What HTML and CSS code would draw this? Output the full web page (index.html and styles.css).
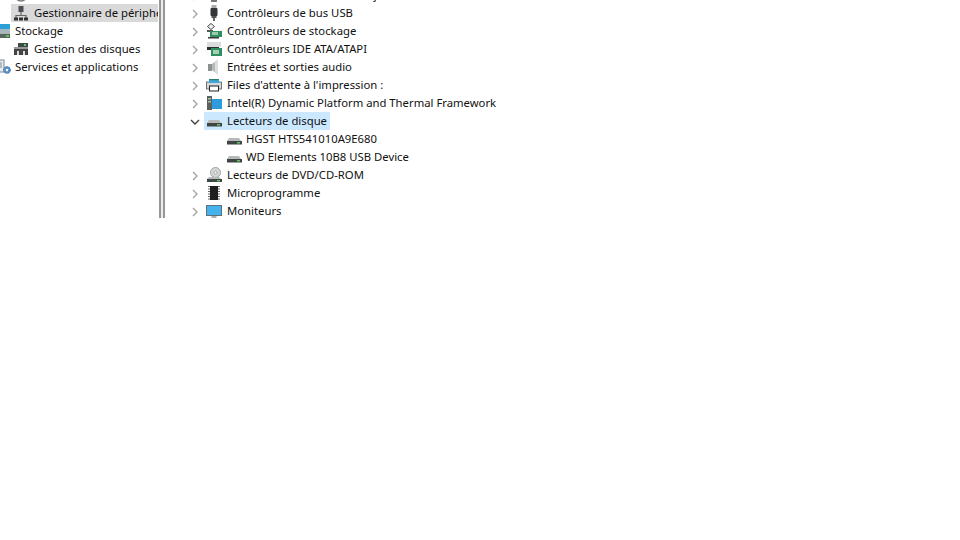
FILE: index.html
```html
<!DOCTYPE html>
<html lang="fr">
<head>
<meta charset="utf-8">
<title>Gestion de l'ordinateur</title>
<link rel="stylesheet" href="styles.css">
</head>
<body>
<div class="app">
  <nav class="left">
    <div class="row lv1">
      <svg class="ic" viewBox="0 0 16 16"><circle cx="8" cy="8" r="6" fill="#eee" stroke="#777" stroke-width="1.5"/></svg>
    </div>
    <div class="row lv1 selected">
      <svg class="ic" viewBox="0 0 16 16"><rect x="5.500" y="1" width="5" height="6" fill="#4a4f55"/><path d="M8 7v3M3 13v-2.500h10V13" fill="none" stroke="#666" stroke-width="1.200"/><rect x="1" y="12.500" width="4" height="3" fill="#333"/><rect x="6" y="12.500" width="4" height="3" fill="#333"/><rect x="11" y="12.500" width="4" height="3" fill="#333"/></svg>
      <span class="label">Gestionnaire de périphé</span>
    </div>
    <div class="row lv0">
      <svg class="ic" viewBox="0 0 16 16"><rect x="2" y="1" width="12" height="5" fill="#2d9fd8"/><rect x="2" y="6" width="12" height="4" fill="#a9b8bf"/><rect x="2" y="10.500" width="12" height="4.500" fill="#56665e"/><rect x="10" y="12" width="3" height="2" fill="#5fc15f"/></svg>
      <span class="label">Stockage</span>
    </div>
    <div class="row lv1">
      <svg class="ic" viewBox="0 0 16 16"><rect x="5" y="2" width="10" height="4" fill="#3f4a46"/><rect x="11" y="3" width="2" height="2" fill="#63c463"/><rect x="1" y="6" width="14" height="8" fill="#444"/><rect x="1" y="6" width="14" height="2" fill="#999"/><rect x="4" y="10" width="2" height="4" fill="#ddd"/><rect x="10" y="10" width="2" height="4" fill="#ddd"/></svg>
      <span class="label">Gestion des disques</span>
    </div>
    <div class="row lv0">
      <svg class="ic" viewBox="0 0 16 16"><rect x="1" y="1" width="7" height="12" fill="#e8edf0" stroke="#7b8790"/><path d="M3 4h3M3 6h3M3 8h3" stroke="#7b8790"/><circle cx="11" cy="11" r="3.400" fill="#5b93c9" stroke="#3b6ea5" stroke-dasharray="1.500 1"/><circle cx="11" cy="11" r="1.200" fill="#fff"/></svg>
      <span class="label">Services et applications</span>
    </div>
  </nav>
  <div class="divider"></div>
  <main class="right">
    <div class="row node">
      <span class="chev"><svg viewBox="0 0 10 10"><path d="M3 1l4 4-4 4"/></svg></span>
      <svg class="ic" viewBox="0 0 16 16"><rect x="5" y="10" width="6" height="5" fill="#777"/></svg>
      <span class="label">Contrôleurs audio, vidéo et jeu</span>
    </div>
    <div class="row node">
      <span class="chev"><svg viewBox="0 0 10 10"><path d="M3 1l4 4-4 4"/></svg></span>
      <svg class="ic" viewBox="0 0 16 16"><rect x="5.500" y="0" width="5" height="3" fill="#aaa"/><rect x="4.500" y="3" width="7" height="8" rx="1" fill="#34373a"/><rect x="5.500" y="11" width="5" height="2" fill="#555"/><rect x="7" y="13" width="2" height="3" fill="#666"/></svg>
      <span class="label">Contrôleurs de bus USB</span>
    </div>
    <div class="row node">
      <span class="chev"><svg viewBox="0 0 10 10"><path d="M3 1l4 4-4 4"/></svg></span>
      <svg class="ic" viewBox="0 0 16 16"><path d="M5 0.500l3.500 3L5 6.500 1.500 3.500z" fill="#f2f2f2" stroke="#444"/><rect x="1" y="7" width="6" height="2" fill="#555"/><rect x="4" y="8" width="12" height="6" fill="#2f8f5f"/><rect x="6" y="9" width="6" height="3" fill="#9cc9ad"/><rect x="2" y="14" width="11" height="1.500" fill="#3a3a3a"/></svg>
      <span class="label">Contrôleurs de stockage</span>
    </div>
    <div class="row node">
      <span class="chev"><svg viewBox="0 0 10 10"><path d="M3 1l4 4-4 4"/></svg></span>
      <svg class="ic" viewBox="0 0 16 16"><rect x="1" y="1" width="14" height="5" fill="#dcdcdc"/><rect x="1" y="6" width="12" height="3" fill="#2e2e2e"/><rect x="5" y="7" width="11" height="8" fill="#2f8f5f"/><rect x="7" y="9" width="6" height="4" fill="#a3cfb3"/></svg>
      <span class="label">Contrôleurs IDE ATA/ATAPI</span>
    </div>
    <div class="row node">
      <span class="chev"><svg viewBox="0 0 10 10"><path d="M3 1l4 4-4 4"/></svg></span>
      <svg class="ic" viewBox="0 0 16 16"><rect x="2" y="5" width="4" height="7" fill="#8d918f"/><path d="M6 5l6-4.500v15L6 11z" fill="#b5b9b7"/><path d="M9 3l3-2.500v15L9 13z" fill="#dcdfdd"/></svg>
      <span class="label">Entrées et sorties audio</span>
    </div>
    <div class="row node">
      <span class="chev"><svg viewBox="0 0 10 10"><path d="M3 1l4 4-4 4"/></svg></span>
      <svg class="ic" viewBox="0 0 16 16"><rect x="0.500" y="5" width="15" height="7" fill="#d4d8da" stroke="#555" stroke-width=".8"/><rect x="3" y="2" width="10" height="4" fill="#3fa8dd"/><rect x="3" y="2" width="10" height="1.200" fill="#2a7d74"/><rect x="3.500" y="9" width="9" height="5" fill="#fff" stroke="#222"/></svg>
      <span class="label">Files d'attente à l'impression :</span>
    </div>
    <div class="row node">
      <span class="chev"><svg viewBox="0 0 10 10"><path d="M3 1l4 4-4 4"/></svg></span>
      <svg class="ic" viewBox="0 0 16 16"><rect x="5" y="4" width="11" height="10" fill="#2e9bdc"/><rect x="1" y="1" width="5" height="14" fill="#59635e"/><rect x="2" y="3" width="3" height="1.500" fill="#a9bab0"/><rect x="2" y="6" width="3" height="1.500" fill="#a9bab0"/></svg>
      <span class="label">Intel(R) Dynamic Platform and Thermal Framework</span>
    </div>
    <div class="row node">
      <span class="chev open"><svg viewBox="0 0 10 10"><path d="M1 3l4 4 4-4"/></svg></span>
      <div class="pick">
        <svg class="ic" viewBox="0 0 16 16"><path d="M3 7h10l2 3H1z" fill="#b5b9b7"/><rect x="1" y="10" width="15" height="3.500" fill="#3f4542"/><rect x="11" y="11" width="3" height="1.500" fill="#62c462"/></svg>
        <span class="label">Lecteurs de disque</span>
      </div>
    </div>
    <div class="row child">
      <svg class="ic" viewBox="0 0 16 16"><path d="M3 7h10l2 3H1z" fill="#b5b9b7"/><rect x="1" y="10" width="15" height="3.500" fill="#3f4542"/><rect x="11" y="11" width="3" height="1.500" fill="#62c462"/></svg>
      <span class="label">HGST HTS541010A9E680</span>
    </div>
    <div class="row child">
      <svg class="ic" viewBox="0 0 16 16"><path d="M3 7h10l2 3H1z" fill="#b5b9b7"/><rect x="1" y="10" width="15" height="3.500" fill="#3f4542"/><rect x="11" y="11" width="3" height="1.500" fill="#62c462"/></svg>
      <span class="label">WD Elements 10B8 USB Device</span>
    </div>
    <div class="row node">
      <span class="chev"><svg viewBox="0 0 10 10"><path d="M3 1l4 4-4 4"/></svg></span>
      <svg class="ic" viewBox="0 0 16 16"><circle cx="9.500" cy="5.500" r="5" fill="#d5d8d8" stroke="#8b9090" stroke-width=".8"/><circle cx="9.500" cy="5.500" r="1.500" fill="#fff" stroke="#777" stroke-width=".6"/><path d="M3 10h10l2 2H1z" fill="#b5b9b7"/><rect x="1" y="12" width="15" height="3" fill="#3f4542"/><rect x="11" y="13" width="3" height="1.500" fill="#62c462"/></svg>
      <span class="label">Lecteurs de DVD/CD-ROM</span>
    </div>
    <div class="row node">
      <span class="chev"><svg viewBox="0 0 10 10"><path d="M3 1l4 4-4 4"/></svg></span>
      <svg class="ic" viewBox="0 0 16 16"><path d="M2 1.500h12M2 4h12M2 6.500h12M2 9h12M2 11.500h12M2 14h12" stroke="#666" stroke-width="1.200"/><rect x="4" y="1" width="8" height="14" fill="#1f1f1f"/></svg>
      <span class="label">Microprogramme</span>
    </div>
    <div class="row node">
      <span class="chev"><svg viewBox="0 0 10 10"><path d="M3 1l4 4-4 4"/></svg></span>
      <svg class="ic" viewBox="0 0 16 16"><rect x="0.500" y="2.500" width="15" height="10" fill="#45b4ee" stroke="#5f7079"/><rect x="5.500" y="13" width="5" height="2" fill="#a9b2b6"/></svg>
      <span class="label">Moniteurs</span>
    </div>
  </main>
</div>
</body>
</html>
```

FILE: styles.css
```css
html, body {
  margin: 0;
  padding: 0;
  background: #fff;
}
body {
  font-family: "Noto Sans", "Open Sans", sans-serif;
  font-size: 11.3px;
  color: #111;
}
.app {
  display: flex;
  height: 218px;
  overflow: hidden;
}
.left {
  width: 159px;
  flex: none;
  margin-top: -14px;
  overflow: hidden;
}
.right {
  flex: 1;
  margin-top: -14px;
}
.divider {
  width: 2px;
  flex: none;
  margin-right: 3px;
  background: #969696;
  box-shadow: 4px 0 0 #969696, 2px 0 0 #ececec;
}
.row {
  display: flex;
  align-items: center;
  height: 18px;
  white-space: nowrap;
}
.ic {
  width: 16px;
  height: 16px;
  flex: none;
}
.label {
  line-height: 18px;
}
.lv0 {
  margin-left: -4px;
}
.lv0 .ic {
  margin-right: 3px;
}
.lv1 {
  margin-left: 11px;
  padding-left: 2px;
}
.lv1 .ic {
  margin-right: 5px;
}
.selected {
  margin-right: 1px;
  background: #d9d9d9;
  overflow: hidden;
}
.node {
  padding-left: 23px;
}
.child {
  padding-left: 62px;
}
.child .ic {
  margin-right: 4px;
}
.node > .ic {
  margin-right: 5px;
}
.chev {
  display: flex;
  align-items: center;
  justify-content: center;
  width: 16px;
  height: 16px;
  margin-top: 2px;
  margin-right: 3px;
  flex: none;
}
.chev svg {
  width: 10px;
  height: 10px;
  fill: none;
  stroke: #a6a6a6;
  stroke-width: 1.4;
}
.chev.open {
  margin-right: 1px;
}
.chev.open svg {
  stroke: #404040;
}
.pick {
  display: flex;
  align-items: center;
  height: 18px;
  padding: 0 3px 0 2px;
  background: #cce8ff;
}
.pick .ic {
  margin-right: 5px;
}
```
